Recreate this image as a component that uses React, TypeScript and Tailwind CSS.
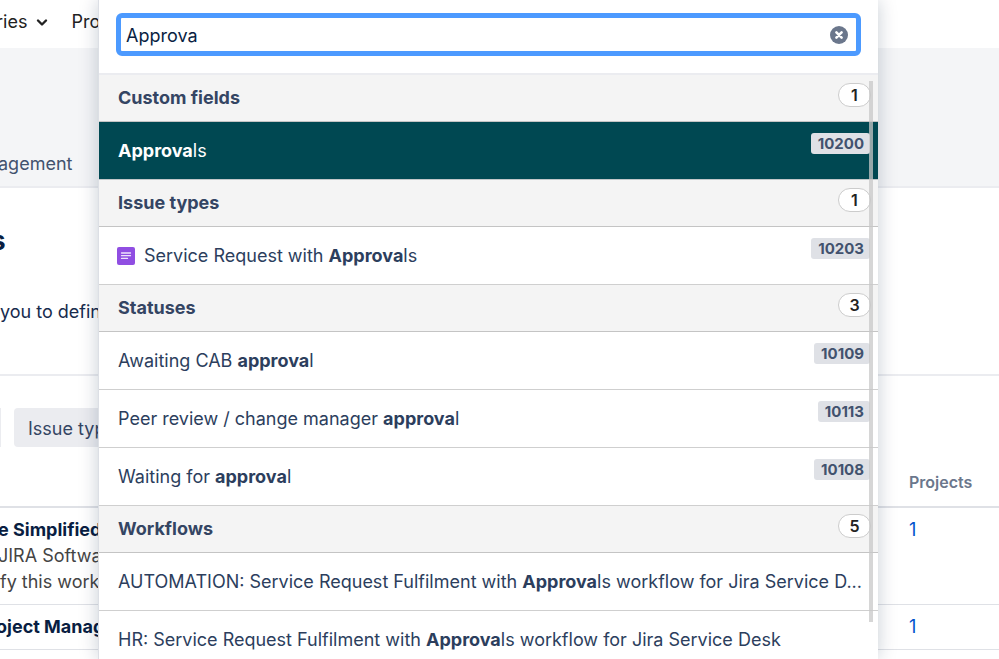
import React, { useState } from 'react';

interface Result {
  before?: string;
  match: string;
  after: string;
  id?: string;
  icon?: boolean;
  active?: boolean;
}

interface ResultGroup {
  title: string;
  count: number;
  results: Result[];
}

const groups: ResultGroup[] = [
  {
    title: 'Custom fields',
    count: 1,
    results: [{ match: 'Approva', after: 'ls', id: '10200', active: true }],
  },
  {
    title: 'Issue types',
    count: 1,
    results: [{ before: 'Service Request with ', match: 'Approva', after: 'ls', id: '10203', icon: true }],
  },
  {
    title: 'Statuses',
    count: 3,
    results: [
      { before: 'Awaiting CAB ', match: 'approva', after: 'l', id: '10109' },
      { before: 'Peer review / change manager ', match: 'approva', after: 'l', id: '10113' },
      { before: 'Waiting for ', match: 'approva', after: 'l', id: '10108' },
    ],
  },
  {
    title: 'Workflows',
    count: 5,
    results: [
      {
        before: 'AUTOMATION: Service Request Fulfilment with ',
        match: 'Approva',
        after: 'ls workflow for Jira Service D...',
      },
      {
        before: 'HR: Service Request Fulfilment with ',
        match: 'Approva',
        after: 'ls workflow for Jira Service Desk',
      },
    ],
  },
];

const RequestIcon = () => (
  <svg viewBox="0 0 18 18" className="-ml-px mr-[9px] h-[18px] w-[18px] shrink-0" aria-hidden="true">
    <rect width="18" height="18" rx="2" fill="#904ee2" />
    <path d="M4.5 6h9M4.5 8.7h9M4.5 11.4h6" stroke="#fff" strokeOpacity="0.85" strokeWidth="1.3" strokeLinecap="round" />
  </svg>
);

const ResultRow: React.FC<{ result: Result }> = ({ result }) => (
  <li>
    <a
      href="#"
      className={`flex h-[58px] border-b pl-[19px] pr-2 ${
        result.active ? 'border-[#c1c7c9] bg-[#004852] text-white' : 'border-[#cfcfcf] bg-white text-[#2c3e5d]'
      }`}
    >
      <span className="flex min-w-0 flex-1 items-center pt-px">
        {result.icon && <RequestIcon />}
        <span className="whitespace-nowrap">
          {result.before}
          <b className="font-bold">{result.match}</b>
          {result.after}
        </span>
      </span>
      {result.id && (
        <span className="mt-[11px] h-[21px] rounded-[3px] bg-[#dfe1e6] pl-[7px] pr-1.5 text-[15px] font-bold leading-[21px] text-[#42526e]">
          {result.id}
        </span>
      )}
    </a>
  </li>
);

const SearchDialog = () => {
  const [query, setQuery] = useState('Approva');

  return (
    <div
      role="dialog"
      aria-label="Search"
      className="absolute inset-y-0 left-[98px] right-[121px] overflow-hidden border-l border-[#dcdfe5] bg-white shadow-[0_0_18px_rgba(9,30,66,0.22)]"
    >
      <div className="border-b-2 border-[#ebecf0] px-[17px] pb-[17px] pt-[13px]">
        <div className="flex h-[43px] items-center rounded-[6px] border-[5px] border-[#4c9aff] pl-[5px] pr-2">
          <input
            type="text"
            aria-label="Search"
            value={query}
            onChange={(e) => setQuery(e.target.value)}
            className="min-w-0 flex-1 pt-0.5 text-[#091e42] outline-none"
          />
          <button type="button" aria-label="Clear" onClick={() => setQuery('')}>
            <svg viewBox="0 0 18 18" className="h-[18px] w-[18px]">
              <circle cx="9" cy="9" r="9" fill="#6b778c" />
              <path d="M6.4 6.4l5.2 5.2M11.6 6.4l-5.2 5.2" stroke="#fff" strokeWidth="2.6" strokeLinecap="round" />
            </svg>
          </button>
        </div>
      </div>

      {groups.map((group) => (
        <section key={group.title}>
          <div className="flex h-[47px] items-center border-b border-[#c4c4c4] bg-[#f4f4f4] pl-[19px] pr-[7px]">
            <h2 className="flex-1 font-bold text-[#344563]">{group.title}</h2>
            <span className="mb-1.5 h-6 w-[33px] rounded-full border border-[#ccc] bg-white text-center text-[16px] font-semibold leading-[22px] text-[#222]">
              {group.count}
            </span>
          </div>
          <ul>
            {group.results.map((result) => (
              <ResultRow key={`${result.before}${result.match}`} result={result} />
            ))}
          </ul>
        </section>
      ))}

      {/* Scrollbar thumb */}
      <div className="absolute bottom-[37px] right-[5px] top-[81px] w-1 bg-[#c8c8c8]/75" />
    </div>
  );
};

const App = () => {
  return (
    <div className="relative h-screen overflow-hidden whitespace-nowrap bg-white font-['Inter','Liberation_Sans',sans-serif] text-[18px] leading-[26px] text-[#172b4d]">
      <nav className="flex h-12 items-center pb-1 text-[#222]">
        <a href="#" className="-ml-1 flex items-center gap-2">
          ries
          <svg viewBox="0 0 14 14" className="h-[14px] w-[14px]" fill="none" stroke="currentColor" strokeWidth="2.4" strokeLinecap="round" strokeLinejoin="round">
            <path d="M3 5.5l4 4 4-4" />
          </svg>
        </a>
        <a href="#" className="ml-[22px]">Pro</a>
      </nav>

      <header className="flex h-[140px] items-end border-b-2 border-[#ebecf0] bg-[#f4f5f7] pb-[9px]">
        <a href="#" className="-ml-0.5 text-[#42526e]">agement</a>
      </header>

      <section className="h-[188px] border-b-2 border-[#ebecf0] pt-[39px]">
        <h1 className="-ml-[9px] text-[26px] font-bold leading-[28px] text-[#091e42]">s</h1>
        <p className="mt-11">you to defin</p>
      </section>

      <div className="flex gap-[13px] pt-8">
        <div className="h-[39px] w-px bg-[#ebecf0]" />
        <button type="button" className="h-[39px] rounded-[4px] bg-[#ebecf0] pl-[14px] pr-8 pt-0.5 text-[#344563]">
          Issue typ
        </button>
      </div>

      <table className="mt-5 w-full table-fixed border-collapse text-left">
        <thead>
          <tr className="h-10 border-b-2 border-[#dfe1e6]">
            <th aria-label="Name" />
            <th className="w-[90px] pb-[9px] align-bottom text-[16px] font-semibold leading-[30px] text-[#6b778c]">Projects</th>
          </tr>
        </thead>
        <tbody className="align-top">
          <tr className="border-b border-[#dfe1e6]">
            <td className="py-[9px]">
              <div className="-ml-0.5 font-bold text-[#091e42]">e Simplified</div>
              <div className="-ml-0.5 text-[#444]">JIRA Softwa</div>
              <div className="text-[#444]">fy this workf</div>
            </td>
            <td className="py-[9px]">
              <a href="#" className="text-[#0052cc]">1</a>
            </td>
          </tr>
          <tr className="border-b border-[#dfe1e6]">
            <td className="py-[9px]">
              <div className="-ml-1 font-bold text-[#091e42]">oject Manag</div>
            </td>
            <td className="py-[9px]">
              <a href="#" className="text-[#0052cc]">1</a>
            </td>
          </tr>
        </tbody>
      </table>

      <SearchDialog />
    </div>
  );
};

export default App;
